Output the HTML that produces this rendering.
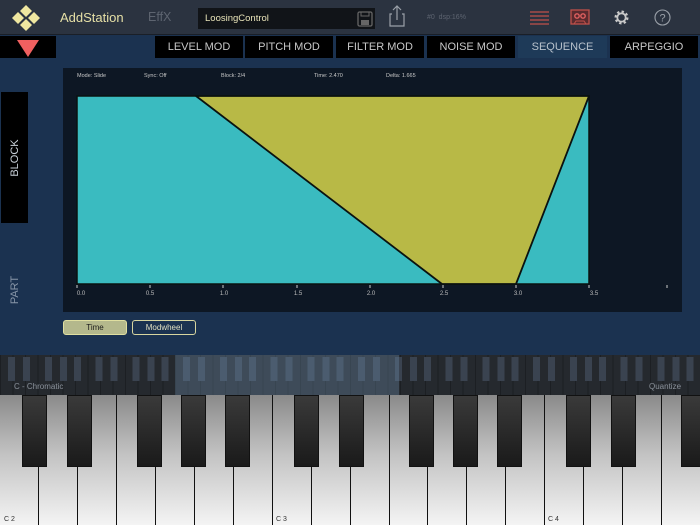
<!DOCTYPE html>
<html><head><meta charset="utf-8"><style>
*{margin:0;padding:0;box-sizing:border-box}
body{width:700px;height:525px;overflow:hidden;background:#1b3250;font-family:"Liberation Sans",sans-serif;position:relative}
.a{position:absolute}
#hdr{left:0;top:0;width:700px;height:35px;background:#2b3340;border-bottom:1px solid #1a1f27}
.tab{position:absolute;top:36px;height:22px;background:#000;color:#c8c8c8;font-size:11px;line-height:22px;text-align:center}
#mini{left:0;top:355px;width:700px;height:40px;background:
linear-gradient(90deg,transparent 8px,#3a4350 8px,#3a4350 15px,transparent 15px,transparent 23px,#3a4350 23px,#3a4350 30px,transparent 30px,transparent 45px,#3a4350 45px,#3a4350 52px,transparent 52px,transparent 60px,#3a4350 60px,#3a4350 67px,transparent 67px,transparent 74px,#3a4350 74px,#3a4350 81px,transparent 81px) 0 2px/87.5px 24px repeat-x,
repeating-linear-gradient(90deg,#1c1f23 0,#1c1f23 1px,#25292e 1px,#25292e 12.5px);}
.wk{position:absolute;top:395px;height:130px;width:38.86px;background:linear-gradient(180deg,#8a8a8a 0%,#c2c2c2 45%,#f4f4f4 100%);border-left:1.2px solid #111}
.bk{position:absolute;top:395px;height:72px;width:25px;background:linear-gradient(180deg,#3a3a3a,#1a1a1a);border:1px solid #111}
.lbl{font-size:7px;color:#333}
</style></head><body>
<div id="hdr" class="a"></div>
<svg class="a" style="left:9px;top:4px" width="34" height="28" viewBox="0 0 34 28">
<g fill="#efe7a0"><path d="M17 1l6 6-6 6-6-6z"/><path d="M9 8l6 6-6 6-6-6z"/><path d="M25 8l6 6-6 6-6-6z"/><path d="M17 15l6 6-6 6-6-6z"/></g></svg>
<div class="a" style="left:60px;top:10px;font-size:13px;color:#e6e0a6">AddStation</div>
<div class="a" style="left:148px;top:10px;font-size:12.5px;color:#5d6470">EffX</div>
<div class="a" style="left:198px;top:8px;width:177px;height:21px;background:#111418"></div>
<div class="a" style="left:205px;top:13px;font-size:9.5px;color:#e8e3b8">LoosingControl</div>
<svg class="a" style="left:357px;top:11px" width="16" height="16"><rect x="1" y="1" width="14" height="14" rx="1.5" fill="none" stroke="#666" stroke-width="1.3"/><rect x="4" y="9" width="8" height="5" fill="#666"/><rect x="4" y="1" width="8" height="4" fill="none" stroke="#666"/></svg>
<svg class="a" style="left:389px;top:5px" width="16" height="22"><path d="M3 9H1v12h14V9h-2M8 15V1M4 5l4-4 4 4" fill="none" stroke="#9aa0a8" stroke-width="1.2"/></svg>
<div class="a" style="left:427px;top:14px;font-size:7px;color:#5d6470">#0&nbsp; dsp:16%</div>
<svg class="a" style="left:530px;top:11px" width="20" height="14"><g stroke="#c0504a" stroke-width="1.3"><path d="M0 1h19M0 5h19M0 9h19M0 13h19"/></g></svg>
<svg class="a" style="left:570px;top:9px" width="20" height="16"><rect x="1" y="1" width="18" height="14" fill="#5a2a2e" stroke="#c0504a" stroke-width="1.3"/><circle cx="7" cy="7" r="2.2" fill="none" stroke="#e06060" stroke-width="1.4"/><circle cx="13" cy="7" r="2.2" fill="none" stroke="#e06060" stroke-width="1.4"/><path d="M4 15l2-3h8l2 3" fill="none" stroke="#c0504a"/></svg>
<svg class="a" style="left:613px;top:9px" width="17" height="17" viewBox="0 0 17 17"><circle cx="8.5" cy="8.5" r="5.5" fill="none" stroke="#c8c8c8" stroke-width="3" stroke-dasharray="2.2 2.1"/><circle cx="8.5" cy="8.5" r="4.2" fill="none" stroke="#c8c8c8" stroke-width="1.8"/></svg>
<svg class="a" style="left:654px;top:9px" width="17" height="17"><circle cx="8.5" cy="8.5" r="7.5" fill="none" stroke="#9aa0a8" stroke-width="1.1"/><text x="8.5" y="12.5" font-size="11" fill="#9aa0a8" text-anchor="middle" font-family="Liberation Sans">?</text></svg>

<div class="a" style="left:0;top:36px;width:56px;height:22px;background:#000"></div>
<svg class="a" style="left:17px;top:40px" width="22" height="17"><path d="M0 0h22L11 17z" fill="#f06060"/></svg>
<div class="tab" style="left:155px;width:88px">LEVEL MOD</div>
<div class="tab" style="left:245px;width:88px">PITCH MOD</div>
<div class="tab" style="left:336px;width:88px">FILTER MOD</div>
<div class="tab" style="left:427px;width:88px">NOISE MOD</div>
<div class="tab" style="left:518px;width:89px;background:#1e3a58;color:#b8c2cc">SEQUENCE</div>
<div class="tab" style="left:610px;width:88px">ARPEGGIO</div>

<div class="a" style="left:1px;top:92px;width:27px;height:131px;background:#000"></div>
<div class="a" style="left:-10px;top:152px;width:50px;font-size:11px;color:#c8d0d8;transform:rotate(-90deg);text-align:center">BLOCK</div>
<div class="a" style="left:-10px;top:284px;width:50px;font-size:11px;color:#8896a8;transform:rotate(-90deg);text-align:center">PART</div>

<div class="a" style="left:63px;top:68px;width:619px;height:244px;background:#0d1724"></div>
<div class="a" style="top:73px;left:77px;font-size:5.5px;color:#c8c8c8">Mode: Slide</div>
<div class="a" style="top:73px;left:144px;font-size:5.5px;color:#c8c8c8">Sync: Off</div>
<div class="a" style="top:73px;left:221px;font-size:5.5px;color:#c8c8c8">Block: 2/4</div>
<div class="a" style="top:73px;left:314px;font-size:5.5px;color:#c8c8c8">Time: 2.470</div>
<div class="a" style="top:73px;left:386px;font-size:5.5px;color:#c8c8c8">Delta: 1.665</div>
<svg class="a" style="left:0;top:0" width="700" height="320">
<rect x="77" y="96" width="512" height="188" fill="#3abbc0" stroke="#0a1210" stroke-width="1.5"/>
<path d="M196 96H589L516 284H442Z" fill="#b8b946" stroke="#0a1210" stroke-width="1.8" stroke-linejoin="round"/>
<g stroke="#ccc" stroke-width="1"><path d="M77 285v3M150 285v3M223 285v3M297 285v3M370 285v3M443 285v3M516 285v3M589 285v3M667 285v3"/></g>
<g font-size="6" fill="#bbb" font-family="Liberation Sans" text-anchor="middle"><text x="81" y="295">0.0</text><text x="150" y="295">0.5</text><text x="224" y="295">1.0</text><text x="298" y="295">1.5</text><text x="371" y="295">2.0</text><text x="444" y="295">2.5</text><text x="518" y="295">3.0</text><text x="594" y="295">3.5</text></g>
</svg>
<div class="a" style="left:63px;top:320px;width:64px;height:15px;background:#b4b88c;border:1px solid #e0dfa0;border-radius:3px;font-size:8px;line-height:13px;text-align:center;color:#1a1a1a">Time</div>
<div class="a" style="left:132px;top:320px;width:64px;height:15px;border:1px solid #d8d6a0;border-radius:3px;font-size:8px;line-height:13px;text-align:center;color:#e0dfc0">Modwheel</div>

<div id="mini" class="a"></div>
<div class="a" style="left:175px;top:355px;width:224px;height:40px;background:rgba(110,140,170,0.35)"></div>
<div class="a" style="left:14px;top:382px;font-size:8px;color:#8a919a">C - Chromatic</div>
<div class="a" style="left:649px;top:382px;font-size:8px;color:#8a919a">Quantize</div>

<div class="wk" style="left:-1px"></div><div class="wk" style="left:38px"></div><div class="wk" style="left:77px"></div><div class="wk" style="left:116px"></div><div class="wk" style="left:155px"></div><div class="wk" style="left:194px"></div><div class="wk" style="left:233px"></div>
<div class="wk" style="left:272px"></div><div class="wk" style="left:311px"></div><div class="wk" style="left:350px"></div><div class="wk" style="left:389px"></div><div class="wk" style="left:427px"></div><div class="wk" style="left:466px"></div><div class="wk" style="left:505px"></div>
<div class="wk" style="left:544px"></div><div class="wk" style="left:583px"></div><div class="wk" style="left:622px"></div><div class="wk" style="left:661px"></div>
<div class="bk" style="left:22px"></div><div class="bk" style="left:67px"></div><div class="bk" style="left:137px"></div><div class="bk" style="left:181px"></div><div class="bk" style="left:225px"></div>
<div class="bk" style="left:294px"></div><div class="bk" style="left:339px"></div><div class="bk" style="left:409px"></div><div class="bk" style="left:453px"></div><div class="bk" style="left:497px"></div>
<div class="bk" style="left:566px"></div><div class="bk" style="left:611px"></div><div class="bk" style="left:681px"></div>
<div class="a lbl" style="left:4px;top:516px">C 2</div>
<div class="a lbl" style="left:276px;top:516px">C 3</div>
<div class="a lbl" style="left:548px;top:516px">C 4</div>
</body></html>
